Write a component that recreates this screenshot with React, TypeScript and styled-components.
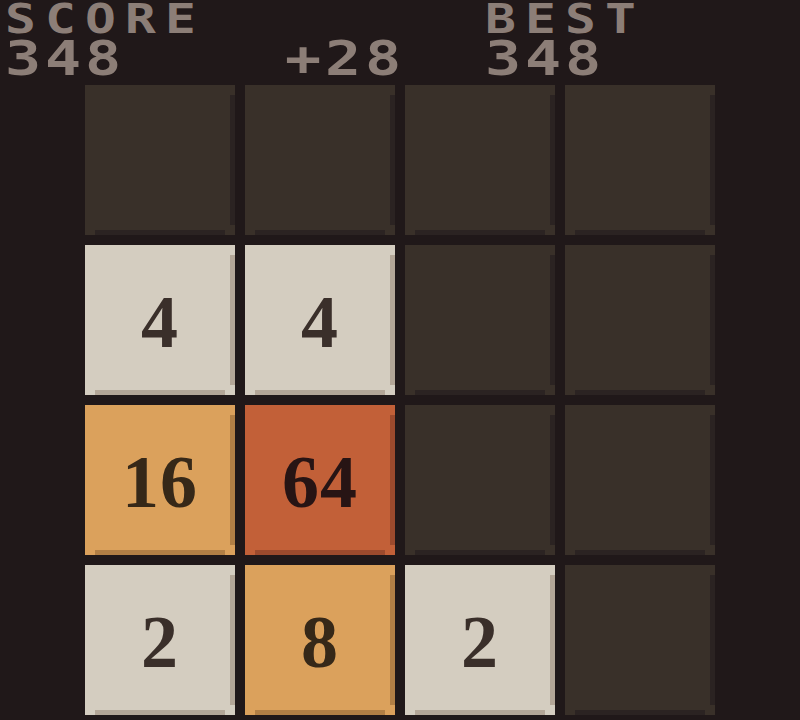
import React from "react";
import styled, { createGlobalStyle, css } from "styled-components";

const GlobalStyle = createGlobalStyle`
  html, body {
    margin: 0;
    padding: 0;
    background-color: #201819;
  }
  #root {
    width: 800px;
    height: 720px;
    overflow: hidden;
  }
`;

const StPage = styled.div`
  display: flex;
  flex-direction: column;
  width: 800px;
  height: 720px;
  background-color: #201819;
`;

const StHeader = styled.div`
  display: grid;
  grid-template-columns: 240px 240px 240px;
  padding: 0 0 0 5px;
  height: 85px;
  color: #8c7e77;
  font-family: "DejaVu Sans Mono", "Liberation Mono", monospace;
  font-weight: 700;
`;

const StStat = styled.div<{ $indent?: number }>`
  display: flex;
  flex-direction: column;
  padding-left: ${({ $indent }) => $indent ?? 0}px;
`;

// chunky, wide lettering: glyphs are stretched sideways from the left edge
const StLabel = styled.div`
  font-size: 41px;
  line-height: 38px;
  min-height: 38px;
  letter-spacing: 7.3px;
  white-space: nowrap;
  transform: scaleX(1.25);
  transform-origin: left center;
`;

const StValue = styled.div`
  font-size: 48px;
  line-height: 40px;
  letter-spacing: 3.1px;
  white-space: nowrap;
  transform: scaleX(1.25);
  transform-origin: left center;
`;

const StBoard = styled.div`
  display: grid;
  grid-template-columns: repeat(4, 150px);
  grid-auto-rows: 150px;
  gap: 10px;
  margin-left: 85px;
`;

type Kind = "empty" | "light" | "orange" | "red";

const palette: Record<Kind, { face: string; shade: string; ink: string }> = {
  empty: { face: "#393029", shade: "#2b2322", ink: "transparent" },
  light: { face: "#d4cdc0", shade: "#b3a697", ink: "#3a2f2a" },
  orange: { face: "#dba15c", shade: "#b27f45", ink: "#362818" },
  red: { face: "#c26038", shade: "#9c4a2d", ink: "#271414" },
};

const StTile = styled.div<{ $kind: Kind }>`
  position: relative;
  display: flex;
  align-items: center;
  justify-content: center;
  ${({ $kind }) => css`
    background-color: ${palette[$kind].face};
    color: ${palette[$kind].ink};
    &::before,
    &::after {
      content: "";
      position: absolute;
      background-color: ${palette[$kind].shade};
    }
  `}
  font-family: "Liberation Serif", "DejaVu Serif", serif;
  font-weight: 700;
  font-size: 74px;
  line-height: 1;
  letter-spacing: 1px;

  /* right edge bevel */
  &::before {
    top: 10px;
    bottom: 10px;
    right: 0;
    width: 5px;
  }
  /* bottom edge bevel */
  &::after {
    left: 10px;
    right: 10px;
    bottom: 0;
    height: 5px;
  }
`;

const StNumber = styled.span`
  position: relative;
  top: 2px;
`;

const cells: (number | null)[] = [
  null, null, null, null,
  4, 4, null, null,
  16, 64, null, null,
  2, 8, 2, null,
];

const kindOf = (value: number | null): Kind => {
  if (value === null) return "empty";
  if (value <= 4) return "light";
  if (value <= 16) return "orange";
  return "red";
};

const App = () => {
  return (
    <>
      <GlobalStyle />
      <StPage>
        <StHeader>
          <StStat>
            <StLabel>SCORE</StLabel>
            <StValue>348</StValue>
          </StStat>
          <StStat $indent={40}>
            <StLabel />
            <StValue>+28</StValue>
          </StStat>
          <StStat>
            <StLabel>BEST</StLabel>
            <StValue>348</StValue>
          </StStat>
        </StHeader>
        <StBoard>
          {cells.map((value, index) => (
            <StTile key={index} $kind={kindOf(value)}>
              {value !== null && <StNumber>{value}</StNumber>}
            </StTile>
          ))}
        </StBoard>
      </StPage>
    </>
  );
};

export default App;
